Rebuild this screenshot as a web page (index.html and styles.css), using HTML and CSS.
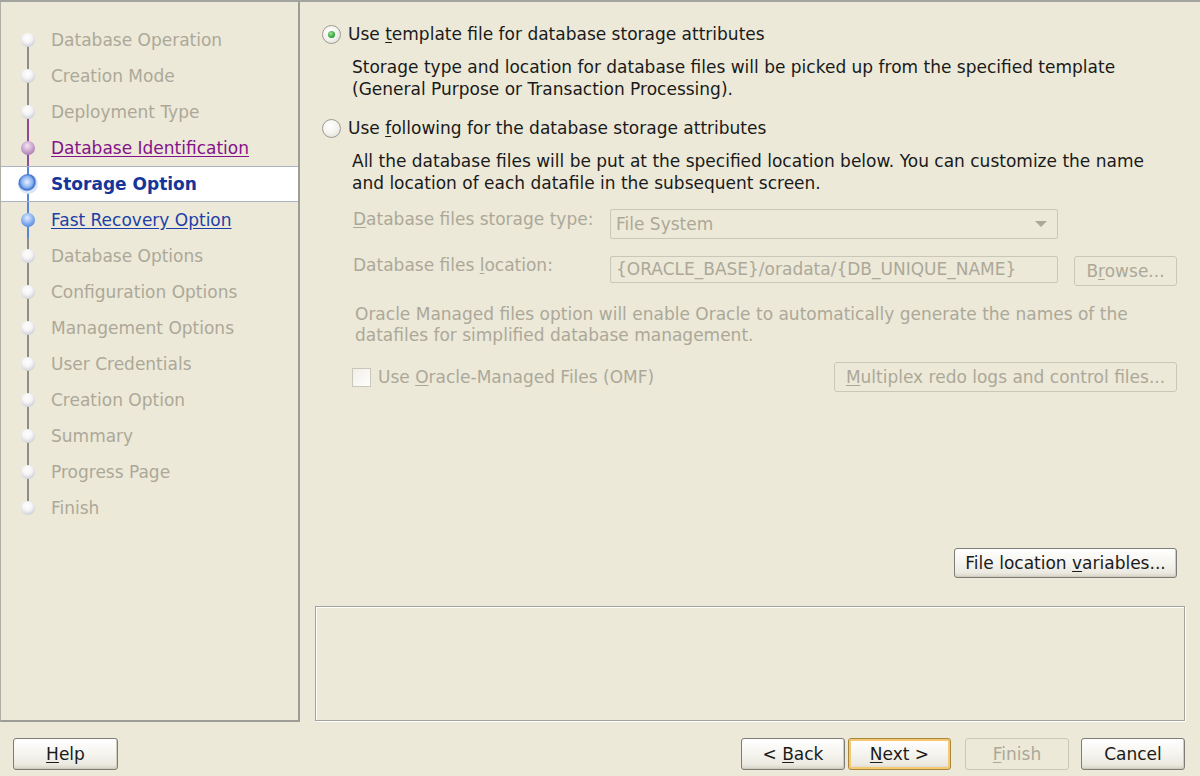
FILE: index.html
```html
<!DOCTYPE html>
<html>
<head>
<meta charset="utf-8">
<link rel="stylesheet" href="styles.css">
</head>
<body>
<div class="window">
  <div class="main">
    <nav class="steps">
      <div class="step"><span class="mk"><span class="line-b"></span><span class="dot"></span></span><span class="lbl">Database Operation</span></div>
      <div class="step"><span class="mk"><span class="line-t"></span><span class="line-b"></span><span class="dot"></span></span><span class="lbl">Creation Mode</span></div>
      <div class="step"><span class="mk"><span class="line-t"></span><span class="line-b purple"></span><span class="dot"></span></span><span class="lbl">Deployment Type</span></div>
      <div class="step step-visited"><span class="mk"><span class="line-t purple"></span><span class="line-b purple"></span><span class="dot"></span></span><span class="lbl">Database Identification</span></div>
      <div class="step step-current"><span class="mk"><span class="line-t blue"></span><span class="line-b blue"></span><span class="dot"></span></span><span class="lbl">Storage Option</span></div>
      <div class="step step-link"><span class="mk"><span class="line-t blue"></span><span class="line-b blue"></span><span class="dot"></span></span><span class="lbl">Fast Recovery Option</span></div>
      <div class="step"><span class="mk"><span class="line-t"></span><span class="line-b"></span><span class="dot"></span></span><span class="lbl">Database Options</span></div>
      <div class="step"><span class="mk"><span class="line-t"></span><span class="line-b"></span><span class="dot"></span></span><span class="lbl">Configuration Options</span></div>
      <div class="step"><span class="mk"><span class="line-t"></span><span class="line-b"></span><span class="dot"></span></span><span class="lbl">Management Options</span></div>
      <div class="step"><span class="mk"><span class="line-t"></span><span class="line-b"></span><span class="dot"></span></span><span class="lbl">User Credentials</span></div>
      <div class="step"><span class="mk"><span class="line-t"></span><span class="line-b"></span><span class="dot"></span></span><span class="lbl">Creation Option</span></div>
      <div class="step"><span class="mk"><span class="line-t"></span><span class="line-b"></span><span class="dot"></span></span><span class="lbl">Summary</span></div>
      <div class="step"><span class="mk"><span class="line-t"></span><span class="line-b"></span><span class="dot"></span></span><span class="lbl">Progress Page</span></div>
      <div class="step"><span class="mk"><span class="line-t"></span><span class="dot"></span></span><span class="lbl">Finish</span></div>
    </nav>
    <section class="content">
      <div class="options">
        <div class="radio-row">
          <span class="radio checked"></span>
          <span class="radio-label">Use <u>t</u>emplate file for database storage attributes</span>
        </div>
        <p class="desc desc1">Storage type and location for database files will be picked up from the specified template<br>(General Purpose or Transaction Processing).</p>
        <div class="radio-row r2">
          <span class="radio"></span>
          <span class="radio-label">Use <u>f</u>ollowing for the database storage attributes</span>
        </div>
        <p class="desc desc2">All the database files will be put at the specified location below. You can customize the name<br>and location of each datafile in the subsequent screen.</p>
        <div class="form-row row-type">
          <span class="flabel"><u>D</u>atabase files storage type:</span>
          <div class="select"><span>File System</span><span class="arrow"></span></div>
        </div>
        <div class="form-row row-loc">
          <span class="flabel loc">Database files <u>l</u>ocation:</span>
          <div class="field"><span>{ORACLE_BASE}/oradata/{DB_UNIQUE_NAME}</span></div>
          <div class="btn disabled browse"><span>B<u>r</u>owse...</span></div>
        </div>
        <p class="omf-desc">Oracle Managed files option will enable Oracle to automatically generate the names of the<br>datafiles for simplified database management.</p>
        <div class="form-row row-omf">
          <span class="check"></span>
          <span class="check-label">Use <u>O</u>racle-Managed Files (OMF)</span>
          <div class="btn disabled multiplex"><span><u>M</u>ultiplex redo logs and control files...</span></div>
        </div>
        <div class="spacer"></div>
        <div class="flv-row">
          <div class="btn flv"><span>File location <u>v</u>ariables...</span></div>
        </div>
      </div>
      <div class="msgbox"></div>
    </section>
  </div>
  <footer class="footer">
    <div class="btn help"><span><u>H</u>elp</span></div>
    <div class="nav-btns">
      <div class="btn btn-back"><span>&lt; <u>B</u>ack</span></div>
      <div class="btn btn-next"><span><u>N</u>ext &gt;</span></div>
      <div class="btn disabled btn-finish"><span><u>F</u>inish</span></div>
      <div class="btn btn-cancel"><span>Cancel</span></div>
    </div>
  </footer>
</div>
</body>
</html>
```
FILE: styles.css
```css
* { box-sizing: border-box; }
html, body {
  margin: 0;
  padding: 0;
  width: 1200px;
  height: 776px;
  overflow: hidden;
  background: #ece9d8;
  font-family: "DejaVu Sans", Verdana, sans-serif;
  font-size: 17px;
  color: #1a1a1a;
}
u { text-decoration: underline; text-underline-offset: 2px; }
.window {
  width: 1200px;
  height: 776px;
  display: flex;
  flex-direction: column;
  border-top: 2px solid #a3a3a0;
}
.main {
  display: flex;
  height: 720px;
}
.steps {
  width: 300px;
  flex: none;
  border-left: 1px solid #b0aea4;
  border-right: 2px solid #9d9c96;
  border-bottom: 2px solid #9d9c96;
  padding-top: 20px;
  display: flex;
  flex-direction: column;
}
.step {
  height: 36px;
  display: flex;
  align-items: center;
  color: #aca899;
  white-space: nowrap;
}
.mk {
  position: relative;
  width: 50px;
  height: 36px;
  flex: none;
}
.line-t, .line-b {
  position: absolute;
  left: 26px;
  width: 2px;
  background: #8f8d88;
}
.line-t { top: 0; height: 18px; }
.line-b { top: 18px; height: 18px; }
.line-t.purple, .line-b.purple { background: #8e4c93; }
.line-t.blue, .line-b.blue { background: #5a86d8; }
.dot {
  position: absolute;
  left: 20px;
  top: 11px;
  width: 14px;
  height: 14px;
  border-radius: 50%;
  background: radial-gradient(circle at 45% 35%, #ffffff 0%, #f4f4f6 40%, #c6c6cf 85%, #a8a8b4 100%);
}
.step-visited .dot { background: radial-gradient(circle at 45% 35%, #f4e6f5 0%, #c49ac8 55%, #8e5a94 100%); }
.step-link .dot { background: radial-gradient(circle at 45% 35%, #e4eeff 0%, #7aa6ee 55%, #3a6cc8 100%); }
.step-current {
  background: #ffffff;
  border-top: 1px solid #a9b3c2;
  border-bottom: 1px solid #a9b3c2;
}
.step-current .mk { height: 34px; }
.step-current .line-t { height: 17px; }
.step-current .line-b { top: 17px; height: 17px; }
.step-current .dot {
  left: 17px;
  top: 7px;
  width: 20px;
  height: 20px;
  background: radial-gradient(circle at 45% 40%, #eaf2ff 0%, #86b0f0 35%, #3f72cc 48%, #e6eefa 60%, #b9cce8 88%, #9fb6da 100%);
}
.step-visited .lbl { color: #84128a; text-decoration: underline; text-underline-offset: 2px; }
.step-link .lbl { color: #1c3fa8; text-decoration: underline; text-underline-offset: 2px; }
.step-current .lbl { color: #14369a; font-weight: bold; }

.content {
  flex: 1;
  display: flex;
  flex-direction: column;
}
.options {
  flex: 1;
  display: flex;
  flex-direction: column;
  padding: 21px 23px 0 22px;
}
.radio-row {
  display: flex;
  align-items: center;
  height: 22px;
}
.radio-row.r2 { margin-top: 17px; }
.radio {
  width: 19px;
  height: 19px;
  border-radius: 50%;
  border: 1px solid #9c9b94;
  background: radial-gradient(circle at 40% 35%, #ffffff 0%, #f4f3ee 50%, #d8d6cc 100%);
  margin-right: 7px;
  position: relative;
  flex: none;
}
.radio.checked::after {
  content: "";
  position: absolute;
  left: 5px;
  top: 5px;
  width: 7px;
  height: 7px;
  border-radius: 50%;
  background: radial-gradient(circle at 40% 35%, #9ee29a 0%, #34a83a 60%, #1f8a2a 100%);
}
.desc {
  margin: 11px 0 0 30px;
  line-height: 22px;
}
.form-row {
  display: flex;
  align-items: flex-start;
  padding-left: 31px;
}
.row-type { margin-top: 15px; height: 30px; }
.row-loc { margin-top: 17px; height: 30px; }
.flabel {
  width: 257px;
  flex: none;
  color: #aca899;
  line-height: 22px;
  margin-top: -1px;
}
.flabel.loc { margin-top: -2px; }
.select, .field {
  width: 448px;
  flex: none;
  border: 1px solid #c9c7ba;
  border-radius: 2px;
  color: #aca899;
  padding-left: 5px;
  position: relative;
  white-space: nowrap;
}
.select { height: 30px; line-height: 29px; }
.field { height: 27px; line-height: 25px; }
.arrow {
  position: absolute;
  right: 10px;
  top: 11px;
  width: 0;
  height: 0;
  border-left: 6px solid transparent;
  border-right: 6px solid transparent;
  border-top: 6px solid #aca899;
}
.omf-desc {
  margin: 18px 0 0 33px;
  line-height: 21px;
  color: #aca899;
}
.row-omf { margin-top: 16px; height: 30px; align-items: center; padding-left: 30px; }
.btn {
  height: 30px;
  border: 1px solid #7d7c78;
  border-radius: 3px;
  background: linear-gradient(#ffffff 0%, #f6f5f0 45%, #ebe9e0 85%, #d6d3c6 100%);
  box-shadow: inset -1px -1px 0 #d0cdbf;
  display: flex;
  align-items: center;
  justify-content: center;
  white-space: nowrap;
  color: #1a1a1a;
}
.btn.disabled {
  background: transparent;
  box-shadow: none;
  border-color: #c9c7ba;
  color: #aca899;
}
.browse { width: 103px; margin-left: 16px; }
.check {
  width: 19px;
  height: 19px;
  border: 1px solid #c9c7ba;
  background: linear-gradient(135deg, #f0eee6 0%, #ffffff 100%);
  flex: none;
  margin-right: 7px;
}
.check-label { color: #aca899; }
.multiplex { width: 343px; margin-left: auto; }
.spacer { flex: 1; }
.flv-row {
  display: flex;
  justify-content: flex-end;
  margin-bottom: 28px;
}
.flv { width: 223px; }
.msgbox {
  height: 115px;
  margin: 0 15px 1px 15px;
  border: 1px solid #a3a29b;
  box-shadow: inset 1px 1px 0 #ffffff, 1px 1px 0 #ffffff;
}
.footer {
  flex: 1;
  display: flex;
  align-items: flex-start;
  justify-content: space-between;
  padding: 16px 15px 0 13px;
}
.help { width: 105px; height: 32px; }
.nav-btns { display: flex; }
.nav-btns .btn { height: 32px; }
.btn-back { width: 104px; }
.btn-next { width: 103px; margin-left: 3px; border-color: #a8863e; box-shadow: inset 0 0 0 2px #f5c872; }
.btn-finish { width: 104px; margin-left: 14px; }
.btn-cancel { width: 104px; margin-left: 12px; }
```
